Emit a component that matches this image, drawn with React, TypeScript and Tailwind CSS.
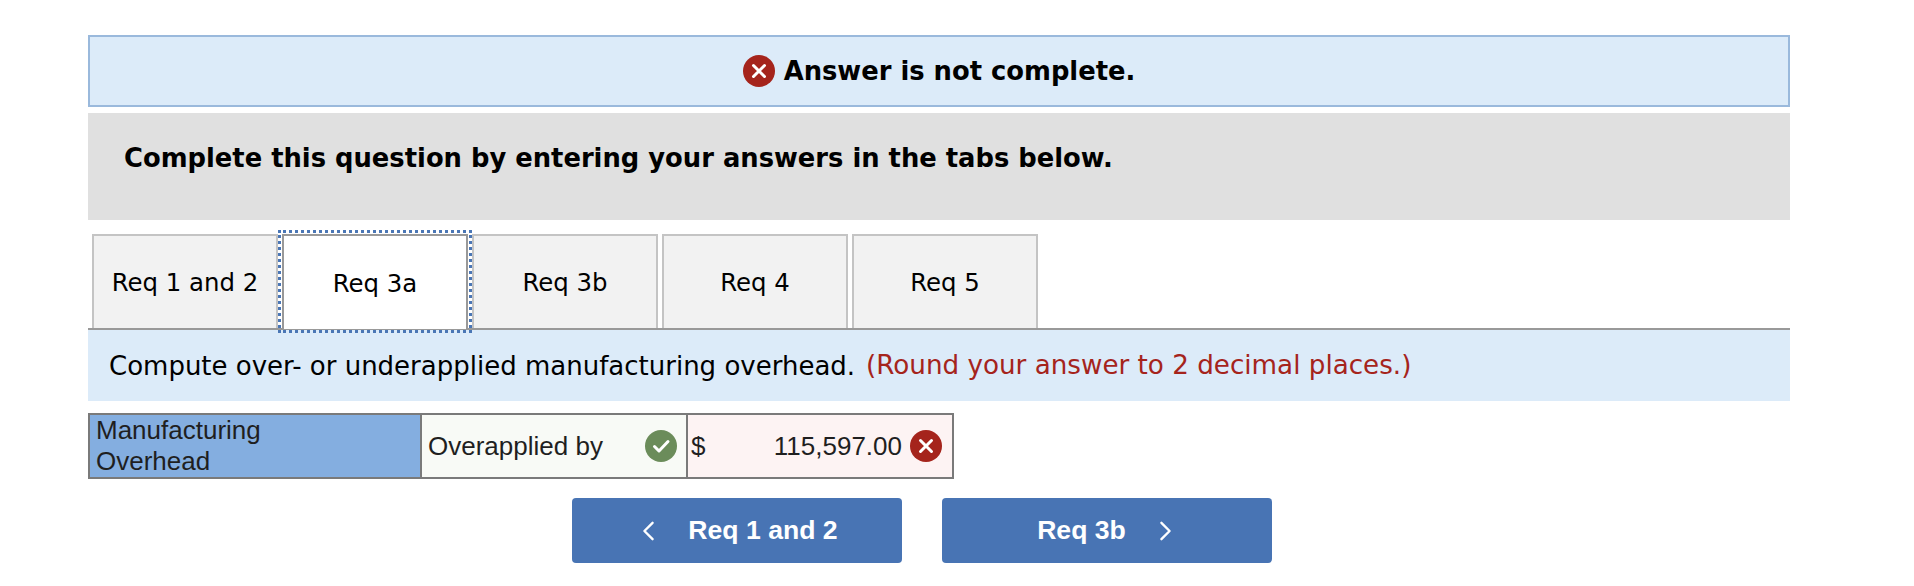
import React from "react";

const XIcon = ({ cls }: { cls: string }) => (
  <svg viewBox="0 0 32 32" className={cls}>
    <circle cx="16" cy="16" r="16" fill="#a5241c" />
    <path d="M10.5 10.5L21.5 21.5M21.5 10.5L10.5 21.5" stroke="#fff" strokeWidth="3" strokeLinecap="round" />
  </svg>
);

const CheckIcon = ({ cls }: { cls: string }) => (
  <svg viewBox="0 0 32 32" className={cls}>
    <circle cx="16" cy="16" r="16" fill="#6b8c5a" />
    <path d="M9.5 16.5L14 21L23 11.5" stroke="#fff" strokeWidth="3" fill="none" strokeLinecap="round" strokeLinejoin="round" />
  </svg>
);

const Tab = ({ label, active }: { label: string; active?: boolean }) => (
  <div
    className={
      active
        ? "relative z-10 -mb-[2px] flex h-[95px] w-[186px] items-center justify-center border-2 border-b-0 border-[#999999] bg-white pt-[3px] outline-[3px] outline-offset-[1px] outline-dotted outline-[#4a76b5]"
        : "flex h-[94px] w-[186px] items-center justify-center border-2 border-b-0 border-[#c4c4c4] bg-[#f2f2f2] pt-[3px]"
    }
  >
    {label}
  </div>
);

export default function App() {
  return (
    <div className="min-h-[586px] bg-white px-[88px] pr-[124px] pt-[35px] text-black [font-family:'DejaVu_Sans',sans-serif]">
      <div className="flex h-[72px] items-center justify-center gap-[9px] border-2 border-[#9ab9dc] bg-[#dcebf9] font-bold">
        <XIcon cls="h-[32px] w-[32px]" />
        <span className="pt-[1px] text-[25.8px]">Answer is not complete.</span>
      </div>
      <div className="mt-[6px] h-[107px] bg-[#e0e0e0] pl-[36px] pt-[28px] text-[25.8px] font-bold leading-[34px]">
        Complete this question by entering your answers in the tabs below.
      </div>
      <div className="mt-[14px] flex gap-[4px] border-b-2 border-[#999999] pl-[4px] text-[24.4px]">
        <Tab label="Req 1 and 2" />
        <Tab label="Req 3a" active />
        <Tab label="Req 3b" />
        <Tab label="Req 4" />
        <Tab label="Req 5" />
      </div>
      <div className="flex h-[71px] items-center bg-[#dcebf9] pl-[21px] pt-[1px] text-[26px]">
        <span>Compute over- or underapplied manufacturing overhead.</span>
        <span className="ml-[11px] text-[26.2px] text-[#a5241c]">(Round your answer to 2 decimal places.)</span>
      </div>
      <div className="mt-[12px] flex h-[66px] w-[866px] border-2 border-[#7a7a7a] text-[26px] leading-[31px] text-[#1f1f1f] [font-family:'Liberation_Sans',sans-serif]">
        <div className="flex w-[330px] items-center bg-[#84aee0] pl-[6px]">
          Manufacturing
          <br />
          Overhead
        </div>
        <div className="flex w-[268px] items-center justify-between border-x-2 border-[#7a7a7a] bg-[#f8faf6] pl-[6px] pr-[9px]">
          <span>Overapplied by</span>
          <CheckIcon cls="h-[32px] w-[32px]" />
        </div>
        <div className="flex flex-1 items-center justify-between bg-[#fdf3f3] pl-[3px] pr-[10px]">
          <span>$</span>
          <span className="flex items-center gap-[8px]">
            115,597.00
            <XIcon cls="h-[32px] w-[32px]" />
          </span>
        </div>
      </div>
      <div className="ml-[484px] mt-[19px] flex gap-[40px] text-[26.6px] font-bold text-white [font-family:'Liberation_Sans',sans-serif]">
        <div className="flex h-[65px] w-[330px] items-center justify-center gap-[33px] rounded-[4px] bg-[#4874b4] pl-[6px]">
          <svg viewBox="0 0 14 22" className="h-[20px] w-[13px]" fill="none" stroke="#fff" strokeWidth="2.6" strokeLinecap="round" strokeLinejoin="round">
            <path d="M11.5 2L2.5 11L11.5 20" />
          </svg>
          <span>Req 1 and 2</span>
        </div>
        <div className="flex h-[65px] w-[330px] items-center justify-center gap-[33px] rounded-[4px] bg-[#4874b4] pr-[5px]">
          <span>Req 3b</span>
          <svg viewBox="0 0 14 22" className="h-[20px] w-[13px]" fill="none" stroke="#fff" strokeWidth="2.6" strokeLinecap="round" strokeLinejoin="round">
            <path d="M2.5 2L11.5 11L2.5 20" />
          </svg>
        </div>
      </div>
    </div>
  );
}
